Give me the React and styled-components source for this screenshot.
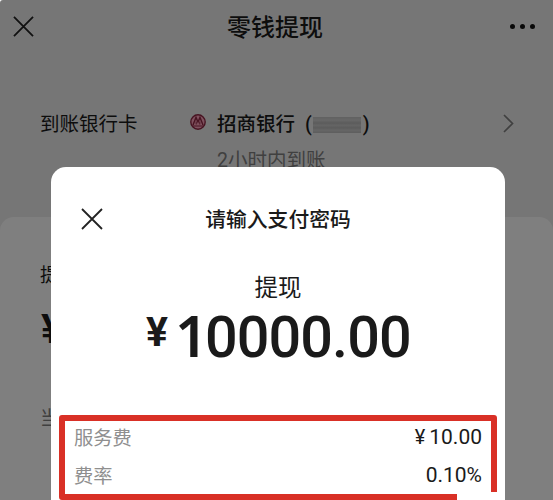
import React from 'react';
import styled, { createGlobalStyle } from 'styled-components';

const FEES = [
  { label: '服务费', value: '10.00', yen: true },
  { label: '费率', value: '0.10%' },
];

export default function App() {
  return (
    <>
      <GlobalStyle />
      <Page.Root>
        <Page.Header>
          <Cross size={21} stroke={1.9} />
          <Page.Title>零钱提现</Page.Title>
          <Page.More>
            <Dot />
            <Dot />
            <Dot />
          </Page.More>
        </Page.Header>
        <Bank.Row>
          <Bank.Label>到账银行卡</Bank.Label>
          <BankLogo />
          <Bank.Info>
            <Bank.Name>
              招商银行
              <Bank.Paren $left={10}>(</Bank.Paren>
              <Bank.Mosaic />
              <Bank.Paren $left={2}>)</Bank.Paren>
            </Bank.Name>
            <Bank.Time>2小时内到账</Bank.Time>
          </Bank.Info>
          <Chevron />
        </Bank.Row>
        <Panel.Root>
          <Panel.Label>提</Panel.Label>
          <Panel.Yen>¥</Panel.Yen>
          <Panel.Balance>当</Panel.Balance>
        </Panel.Root>
      </Page.Root>

      <Mask />

      <Modal.Root>
        <Modal.Header>
          <Cross size={22} stroke={1.8} />
          <Modal.Title>请输入支付密码</Modal.Title>
        </Modal.Header>
        <Modal.Kind>提现</Modal.Kind>
        <Modal.Amount>
          <Modal.Yen>¥</Modal.Yen>
          <Modal.Digits>
            <Modal.Lead>1</Modal.Lead>0000.00
          </Modal.Digits>
        </Modal.Amount>
        <Fee.List>
          {FEES.map((fee) => (
            <Fee.Row key={fee.label}>
              <Fee.Label>{fee.label}</Fee.Label>
              <Fee.Value>
                {fee.yen && <Fee.Yen>¥</Fee.Yen>}
                {fee.value}
              </Fee.Value>
            </Fee.Row>
          ))}
          <Outline />
        </Fee.List>
      </Modal.Root>
    </>
  );
}

function Cross({ size, stroke }) {
  return (
    <svg width={size} height={size} viewBox="0 0 22 22" fill="none" stroke="#222" strokeWidth={stroke}>
      <path d="M1 1L21 21M21 1L1 21" />
    </svg>
  );
}

function BankLogo() {
  return (
    <LogoSvg width="16" height="16" viewBox="0 0 16 16" fill="none">
      <circle cx="8" cy="8" r="7.2" fill="#ffa3bd" stroke="#8f2844" strokeWidth="1.4" />
      <path d="M3 11L6 3.4L8 8L10 3.4L13 11" stroke="#8f2844" strokeWidth="1.4" />
      <path d="M6.2 7.5V10.5M9.8 7.5V10.5M3 12H13" stroke="#8f2844" strokeWidth="1" />
    </LogoSvg>
  );
}

function Chevron() {
  return (
    <ChevronSvg width="11" height="19" viewBox="0 0 11 19" fill="none" stroke="#808080" strokeWidth="1.7">
      <path d="M1 1L9.5 9.5L1 18" />
    </ChevronSvg>
  );
}

// red marker line, open at the bottom right corner
function Outline() {
  return (
    <OutlineSvg width="438" height="85" viewBox="0 0 438 85" fill="none" stroke="#d93026" strokeWidth="6" strokeLinejoin="round">
      <path d="M398 82H3V3H435V77" />
    </OutlineSvg>
  );
}

const GlobalStyle = createGlobalStyle`
  * {
    box-sizing: border-box;
  }
  body {
    margin: 0;
    width: 553px;
    height: 500px;
    overflow: hidden;
    background: #fff;
    font-family: Roboto, 'Noto Sans CJK SC', sans-serif;
    color: #1a1a1a;
  }
  svg {
    display: block;
    flex: none;
  }
`;

const Page = {
  Root: styled.div`
    height: 500px;
    display: flex;
    flex-direction: column;
    background: #ededed;
    border-top-left-radius: 3px;
    overflow: hidden;
  `,
  Header: styled.header`
    height: 53px;
    padding: 0 18px 0 13px;
    display: grid;
    grid-template-columns: 60px 1fr 60px;
    align-items: center;
  `,
  Title: styled.h1`
    margin: 0;
    padding: 3px 0 0 2px;
    text-align: center;
    font-size: 24px;
    line-height: 36px;
    font-weight: 500;
  `,
  More: styled.div`
    display: flex;
    justify-content: flex-end;
    gap: 5px;
  `,
};

const Dot = styled.i`
  width: 5px;
  height: 5px;
  border-radius: 50%;
  background: #111;
`;

const Bank = {
  Row: styled.div`
    height: 164px;
    padding: 57px 40px 0;
    display: flex;
    align-items: flex-start;
    line-height: 30px;
    font-size: 19.5px;
  `,
  Label: styled.div`
    width: 150px;
  `,
  Info: styled.div`
    flex: 1;
    margin-left: 11px;
  `,
  Name: styled.div`
    display: flex;
    align-items: center;
    font-weight: 500;
  `,
  Paren: styled.span`
    margin-left: ${({ $left }) => $left}px;
    line-height: 26px;
  `,
  Mosaic: styled.span`
    width: 48px;
    height: 16px;
    margin-left: 1px;
    background: linear-gradient(#c2c2c2, #d0d0d0 20%, #b8b8b8 38%, #cacaca 52%, #b8b8b8 68%, #cdcdcd 82%, #bcbcbc);
    filter: blur(0.6px);
  `,
  Time: styled.div`
    margin-top: 6px;
    color: #808080;
  `,
};

const LogoSvg = styled.svg`
  margin-top: 4px;
`;

const ChevronSvg = styled.svg`
  margin: 4px -1px 0 0;
`;

const Panel = {
  Root: styled.section`
    flex: 1;
    padding: 45px 40px 0;
    background: #fff;
    border-radius: 14px 14px 0 0;
  `,
  Label: styled.div`
    font-size: 19px;
    line-height: 28px;
  `,
  Yen: styled.div`
    margin-top: 14px;
    padding-left: 1px;
    font-size: 41px;
    line-height: 50px;
    font-weight: 700;
  `,
  Balance: styled.div`
    margin-top: 51px;
    font-size: 19px;
    line-height: 28px;
    color: #808080;
  `,
};

const Mask = styled.div`
  position: absolute;
  top: 0;
  left: 0;
  width: 553px;
  height: 500px;
  border-top-left-radius: 3px;
  background: rgba(0, 0, 0, 0.5);
`;

const Modal = {
  Root: styled.div`
    position: absolute;
    top: 167px;
    left: 51px;
    width: 454px;
    height: 333px;
    display: flex;
    flex-direction: column;
    background: #fff;
    border-radius: 15px 15px 0 0;
    overflow: hidden;
  `,
  Header: styled.div`
    height: 32px;
    margin-top: 36px;
    padding: 0 30px;
    display: grid;
    grid-template-columns: 22px 1fr 22px;
    align-items: center;
  `,
  Title: styled.h2`
    margin: 0;
    padding-top: 2px;
    text-align: center;
    font-size: 20.8px;
    line-height: 30px;
    font-weight: 500;
  `,
  Kind: styled.div`
    margin-top: 35px;
    text-align: center;
    font-size: 23.5px;
    line-height: 36px;
  `,
  Amount: styled.div`
    height: 66px;
    margin-top: -1px;
    padding-left: 95px;
    display: flex;
    font-size: 57.5px;
    line-height: 66px;
    font-weight: 500;
    letter-spacing: -0.9px;
  `,
  Yen: styled.span`
    width: 29px;
    font-size: 41px;
    line-height: 54px;
    font-weight: 700;
  `,
  Digits: styled.span`
    white-space: nowrap;
  `,
  Lead: styled.span`
    margin-right: -2px;
    font-family: 'Noto Sans', sans-serif;
    font-weight: 600;
    line-height: 1;
  `,
};

const Fee = {
  List: styled.div`
    position: relative;
    margin: 44px 8px 0;
    padding: 3px 15px 0;
  `,
  Row: styled.div`
    height: 38px;
    display: flex;
    align-items: center;
    justify-content: space-between;
  `,
  Label: styled.span`
    font-size: 19.3px;
    color: #8f8f8f;
  `,
  Value: styled.span`
    font-size: 21px;
  `,
  Yen: styled.span`
    margin-right: 4px;
    font-size: 20px;
  `,
};

const OutlineSvg = styled.svg`
  position: absolute;
  top: 0;
  left: 0;
`;
